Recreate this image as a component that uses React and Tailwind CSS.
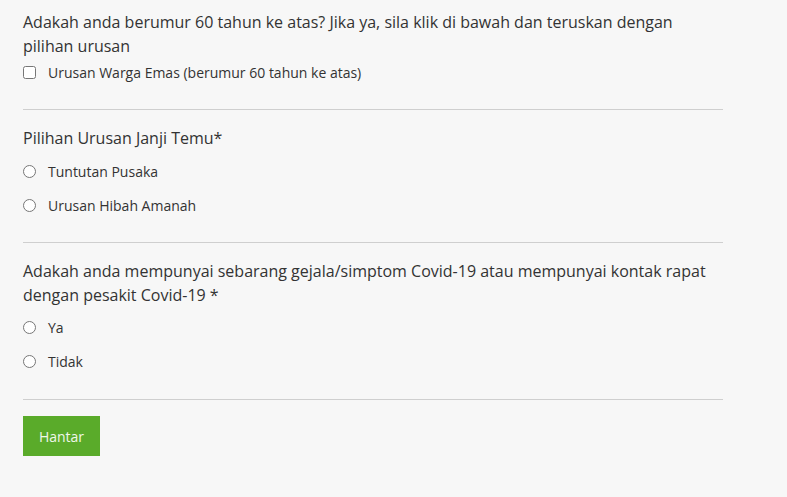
export default function App() {
  const font = { fontFamily: '"Open Sans", sans-serif' };
  return (
    <div className="min-h-[497px] w-full bg-[#f7f7f7] text-[#333]" style={font}>
      <div className="w-[700px] ml-[23px] pt-[10px]">
        <div className="text-[16px] leading-[24px]">
          Adakah anda berumur 60 tahun ke atas? Jika ya, sila klik di bawah dan teruskan dengan pilihan urusan
        </div>
        <label className="mt-[4px] flex items-center h-[20px] text-[14px]">
          <input type="checkbox" className="m-0 w-[13px] h-[13px]" />
          <span className="ml-[12px]">Urusan Warga Emas (berumur 60 tahun ke atas)</span>
        </label>
        <div className="mt-[27px] h-px bg-[#cfcfcf]" />

        <div className="mt-[16px] text-[16px] leading-[24px]">Pilihan Urusan Janji Temu*</div>
        <div className="mt-[11px] flex flex-col gap-[14px]">
          <label className="flex items-center h-[20px] text-[14px]">
            <input type="radio" name="u" className="m-0 w-[13px] h-[13px]" />
            <span className="ml-[12px]">Tuntutan Pusaka</span>
          </label>
          <label className="flex items-center h-[20px] text-[14px]">
            <input type="radio" name="u" className="m-0 w-[13px] h-[13px]" />
            <span className="ml-[12px]">Urusan Hibah Amanah</span>
          </label>
        </div>
        <div className="mt-[27px] h-px bg-[#cfcfcf]" />

        <div className="mt-[16px] text-[16px] leading-[24px]">
          Adakah anda mempunyai sebarang gejala/simptom Covid-19 atau mempunyai kontak rapat dengan pesakit Covid-19 *
        </div>
        <div className="mt-[10px] flex flex-col gap-[14px]">
          <label className="flex items-center h-[20px] text-[14px]">
            <input type="radio" name="c" className="m-0 w-[13px] h-[13px]" />
            <span className="ml-[12px]">Ya</span>
          </label>
          <label className="flex items-center h-[20px] text-[14px]">
            <input type="radio" name="c" className="m-0 w-[13px] h-[13px]" />
            <span className="ml-[12px]">Tidak</span>
          </label>
        </div>
        <div className="mt-[28px] h-px bg-[#cfcfcf]" />

        <button className="mt-[16px] w-[77px] h-[40px] bg-[#5aab2a] text-[#f0f7ea] text-[14px]">
          Hantar
        </button>
      </div>
    </div>
  );
}
